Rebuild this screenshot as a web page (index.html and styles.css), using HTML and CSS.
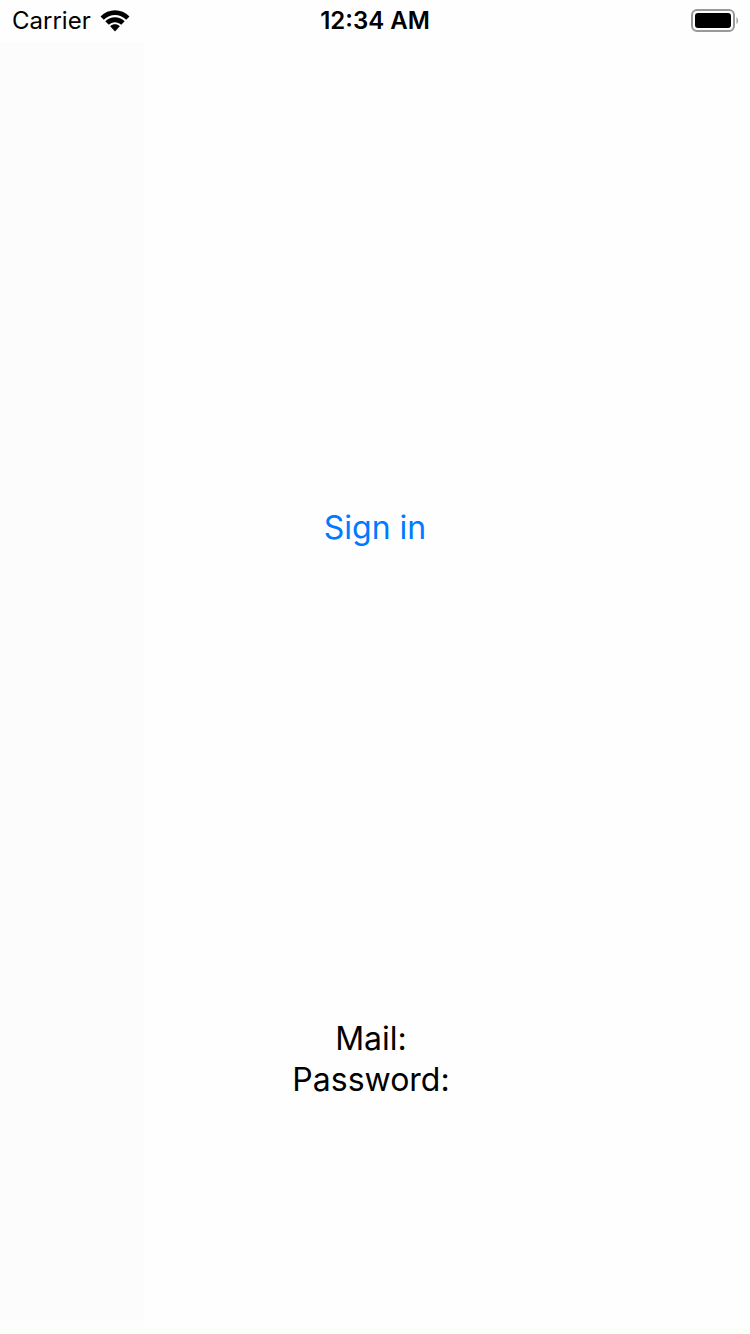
FILE: index.html
```html
<!DOCTYPE html>
<html lang="en">
<head>
<meta charset="utf-8">
<meta name="viewport" content="width=device-width, initial-scale=1">
<title>Sign in</title>
<link rel="stylesheet" href="styles.css">
</head>
<body>
<div class="screen">
  <header class="status">
    <div class="network">
      <span>Carrier</span>
      <svg class="wifi" viewBox="0 0 30 22" aria-hidden="true">
        <path d="M.5 6.500C8.500-1.700 21.500-1.700 29.500 6.500L26.200 9.800C20 3.500 10 3.500 3.800 9.800Z"/>
        <path d="M5.300 11.300C10.800 6 19.200 6 24.700 11.300L21.200 14.800C17.800 11.300 12.200 11.300 8.800 14.800Z"/>
        <path d="M10.200 16.300C13 13.700 17 13.700 19.800 16.300L15 21.500Z"/>
      </svg>
    </div>
    <time class="clock">12:34 AM</time>
    <svg class="battery" viewBox="0 0 48 24" aria-hidden="true">
      <rect class="shell" x="2" y="1" width="42" height="21" rx="5"/>
      <rect x="5" y="4" width="36" height="15" rx="3"/>
      <path class="cap" d="M46.500 8Q48 9 48 11.500T46.500 15Z"/>
    </svg>
  </header>
  <main class="content">
    <section class="half"><button class="signin" type="button">Sign in</button></section>
    <section class="half account"><p>Mail:</p><p>Password:</p></section>
  </main>
</div>
</body>
</html>
```
FILE: styles.css
```css
* { box-sizing: border-box; }
body { margin: 0; background: #fff; color: #000; font-family: Inter, "Liberation Sans", sans-serif; }
.screen { min-height: 100vh; display: flex; flex-direction: column; border-bottom: 7px solid #fbfffa; background: linear-gradient(to right, #fcfcfc 19.2%, #fefefe 19.2%); }
.status { height: 42px; padding: 0 12px; display: grid; grid-template-columns: 1fr auto 1fr; align-items: center; font-size: 24px; line-height: 42px; background: #fefefe; }
.network { display: flex; align-items: center; gap: 9px; }
.wifi { width: 30px; height: 22px; margin-bottom: 1px; }
.clock { font-weight: 600; }
.battery { width: 48px; height: 24px; justify-self: end; margin-bottom: 1px; }
.shell { fill: none; stroke: #999; stroke-width: 2; }
.cap { fill: #999; }
.content { flex: 1; display: grid; grid-template-rows: 1fr 1fr; padding: 220px 0 2px; }
.half { display: flex; flex-direction: column; align-items: center; justify-content: center; }
.signin { border: 0; padding: 0; background: none; color: #007aff; font: inherit; font-size: 32px; line-height: 41px; }
.account { padding-right: 8px; font-size: 32px; line-height: 41px; }
.account p { margin: 0; }
```
